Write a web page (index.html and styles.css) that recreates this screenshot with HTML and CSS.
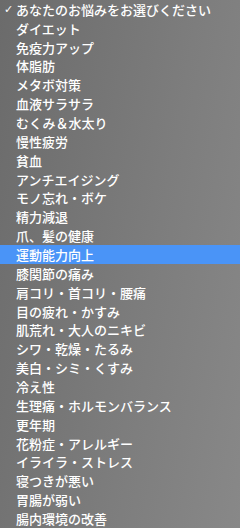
FILE: index.html
```html
<!DOCTYPE html>
<html lang="ja">
<head>
    <meta charset="UTF-8">
    <meta name="viewport" content="width=device-width, initial-scale=1.0">
    <title>お悩み選択</title>
    <link rel="stylesheet" href="styles.css">
</head>
<body>
    <ul class="menu">
        <li class="item checked"><span class="check">✓</span>あなたのお悩みをお選びください</li>
        <li class="item">ダイエット</li>
        <li class="item">免疫力アップ</li>
        <li class="item">体脂肪</li>
        <li class="item">メタボ対策</li>
        <li class="item">血液サラサラ</li>
        <li class="item">むくみ＆水太り</li>
        <li class="item">慢性疲労</li>
        <li class="item">貧血</li>
        <li class="item">アンチエイジング</li>
        <li class="item">モノ忘れ・ボケ</li>
        <li class="item">精力減退</li>
        <li class="item">爪、髪の健康</li>
        <li class="item active">運動能力向上</li>
        <li class="item">膝関節の痛み</li>
        <li class="item">肩コリ・首コリ・腰痛</li>
        <li class="item">目の疲れ・かすみ</li>
        <li class="item">肌荒れ・大人のニキビ</li>
        <li class="item">シワ・乾燥・たるみ</li>
        <li class="item">美白・シミ・くすみ</li>
        <li class="item">冷え性</li>
        <li class="item">生理痛・ホルモンバランス</li>
        <li class="item">更年期</li>
        <li class="item">花粉症・アレルギー</li>
        <li class="item">イライラ・ストレス</li>
        <li class="item">寝つきが悪い</li>
        <li class="item">胃腸が弱い</li>
        <li class="item">腸内環境の改善</li>
    </ul>
</body>
</html>
```

FILE: styles.css
```css
html, body {
    margin: 0;
    padding: 0;
    height: 100%;
}
body {
    font-family: "Noto Sans CJK JP", "Noto Sans", sans-serif;
    background: linear-gradient(100deg, #6b6b6b 0%, #7d7d7d 60%, #888888 100%);
    color: #fff;
}
.menu {
    list-style: none;
    margin: 0;
    padding: 0;
    height: 528px;
    display: grid;
    grid-template-rows: repeat(28, 1fr);
}
.item {
    position: relative;
    display: flex;
    align-items: center;
    padding-left: 16px;
    font-size: 13px;
    font-weight: 500;
    line-height: 1;
    white-space: nowrap;
}
.check {
    position: absolute;
    left: 4px;
    font-family: "DejaVu Sans", sans-serif;
    font-size: 11px;
    font-weight: bold;
}
.active {
    background-color: #4a94f7;
}
```
